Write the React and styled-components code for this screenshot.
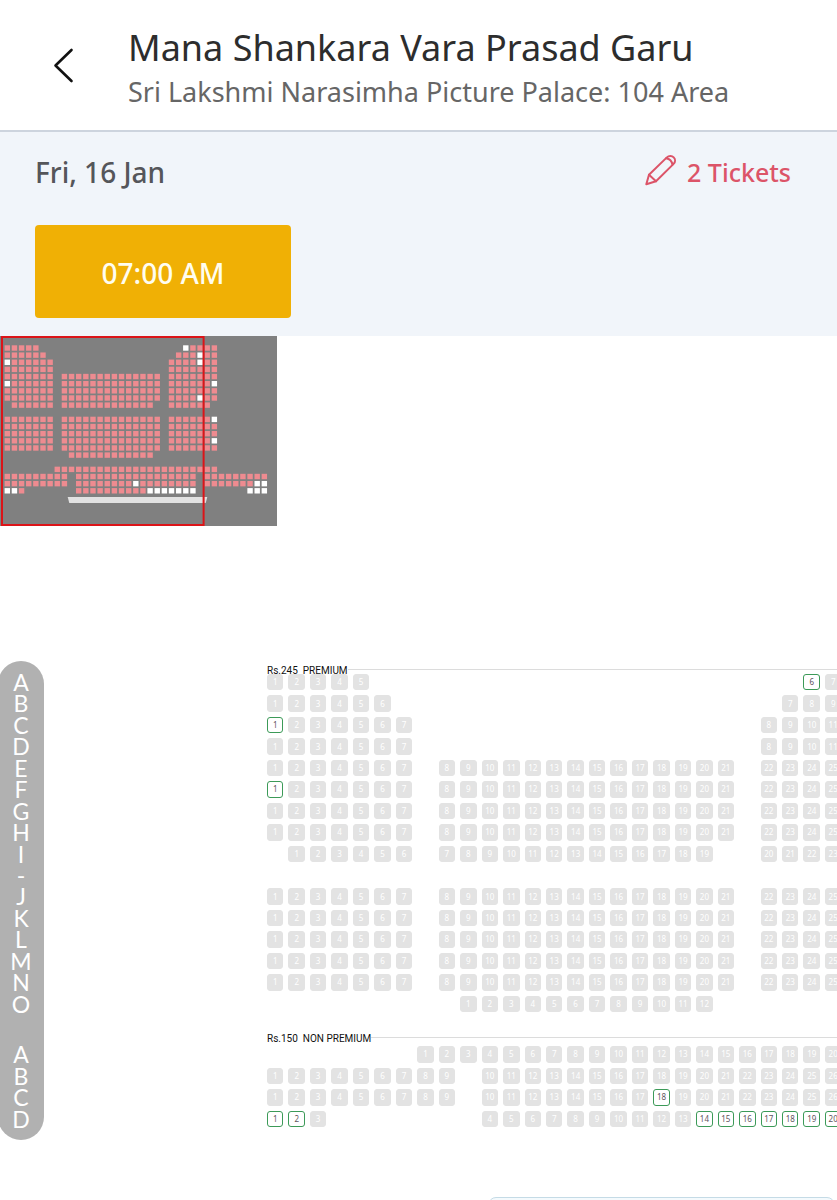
import React from 'react'
import styled, { createGlobalStyle } from 'styled-components'

const colors = {
  accent: '#dc5468',
  amber: '#f0b005',
  band: '#f1f5fa',
  sold: '#e3e3e3',
  open: '#3c9a58',
  rail: '#b1b1b1',
}

const COLUMNS = 37

// seats: [first, last] column ranges, open: columns that can still be booked
const zones = [
  {
    id: 'premium',
    label: 'Rs.245\u00a0 PREMIUM',
    rows: [
      { name: 'A', seats: [[0, 4], [25, 29]], open: [25] },
      { name: 'B', seats: [[0, 5], [24, 29]], open: [27] },
      { name: 'C', seats: [[0, 6], [23, 29]], open: [0, 27] },
      { name: 'D', seats: [[0, 6], [23, 29]], open: [] },
      { name: 'E', seats: [[0, 6], [8, 21], [23, 29]], open: [] },
      { name: 'F', seats: [[0, 6], [8, 21], [23, 29]], open: [0, 29] },
      { name: 'G', seats: [[0, 6], [8, 21], [23, 29]], open: [] },
      { name: 'H', seats: [[0, 6], [8, 21], [23, 29]], open: [27] },
      { name: 'I', seats: [[1, 6], [8, 20], [23, 28]], open: [] },
      { name: '-', seats: [], open: [] },
      { name: 'J', seats: [[0, 6], [8, 21], [23, 29]], open: [29] },
      { name: 'K', seats: [[0, 6], [8, 21], [23, 29]], open: [] },
      { name: 'L', seats: [[0, 6], [8, 21], [23, 29]], open: [] },
      { name: 'M', seats: [[0, 6], [8, 21], [23, 29]], open: [29] },
      { name: 'N', seats: [[0, 6], [8, 21], [23, 29]], open: [] },
      { name: 'O', seats: [[9, 20]], open: [] },
    ],
  },
  {
    id: 'non-premium',
    label: 'Rs.150\u00a0 NON PREMIUM',
    rows: [
      { name: 'A', seats: [[7, 29]], open: [] },
      { name: 'B', seats: [[0, 8], [10, 26], [28, 36]], open: [] },
      { name: 'C', seats: [[0, 8], [10, 26], [28, 36]], open: [18, 35, 36] },
      { name: 'D', seats: [[0, 2], [10, 26], [34, 36]], open: [0, 1, 20, 21, 22, 23, 24, 25, 26, 34, 35, 36] },
    ],
  },
]

// seats are numbered left to right, aisles don't count
const seatsOf = (row) => {
  const list = []
  row.seats.forEach(([first, last]) => {
    for (let col = first; col <= last; col += 1) {
      list.push({ col, number: list.length + 1, open: row.open.includes(col) })
    }
  })
  return list
}

const MiniMap = () => {
  const pitch = 7.14
  const offsets = [0, 17]
  return (
    <MiniMapBox viewBox="0 0 277 190" role="img" aria-label="Seat map overview">
      <rect width="277" height="190" fill="#808080" />
      {zones.map((zone, z) => zone.rows.map((row, r) => seatsOf(row).map(({ col, open }) => (
        <rect
          key={`${zone.id}-${row.name}-${col}`}
          x={4.6 + (col * pitch)}
          y={9.3 + ((offsets[z] + r) * pitch)}
          width="5.4"
          height="5.4"
          fill={open ? '#fff' : '#ee8b90'}
        />
      ))))}
      <path d="M67.7 161h139.6l-1.6 6H69.3z" fill="#e2e2e2" />
      <rect x="2" y="1" width="201.6" height="188" fill="none" stroke="#dc1418" strokeWidth="2" />
    </MiniMapBox>
  )
}

const Zone = ({ zone }) => (
  <ZoneSection>
    <ZoneTitle $tight={zone.id === 'premium'}>{zone.label}</ZoneTitle>
    <SeatGrid $rows={zone.rows.length}>
      {zone.rows.map((row, r) => seatsOf(row).map(({ col, number, open }) => (
        <Seat
          key={`${row.name}-${col}`}
          type="button"
          disabled={!open}
          aria-label={`Row ${row.name} seat ${number}`}
          $row={r + 1}
          $col={col + 1}
        >
          {number}
        </Seat>
      )))}
    </SeatGrid>
  </ZoneSection>
)

const App = () => (
  <Page>
    <GlobalStyle />
    <Header>
      <BackButton type="button" aria-label="Back">
        <svg width="24" height="36" viewBox="0 0 24 36" fill="none" stroke="#111" strokeWidth="2.6" strokeLinecap="round" strokeLinejoin="round">
          <path d="M19.500 3 3.500 18.500 19.500 34" />
        </svg>
      </BackButton>
      <Titles>
        <Movie>Mana Shankara Vara Prasad Garu</Movie>
        <Venue>Sri Lakshmi Narasimha Picture Palace: 104 Area</Venue>
      </Titles>
    </Header>
    <ShowBar>
      <ShowInfo>
        <ShowDate>Fri, 16 Jan</ShowDate>
        <TicketsButton type="button">
          <svg width="32" height="36" viewBox="0 0 32 36" fill="none" stroke={colors.accent} strokeWidth="2" strokeLinejoin="round" strokeLinecap="round">
            <path d="M1.300 30.200 4 20.800 21.600 3.600C24 1.300 27 1.600 28.700 3.400 30.500 5.300 30.500 8 28.600 9.900L11 27.300z" />
            <path d="M4 20.800 11 27.300M21.200 4.200c3 .5 5.600 2.900 6.300 6.400" />
          </svg>
          2 Tickets
        </TicketsButton>
      </ShowInfo>
      <TimeButton type="button">07:00 AM</TimeButton>
    </ShowBar>
    <MiniMap />
    <Hall>
      <Rail>
        {zones.map(zone => (
          <RailGroup key={zone.id} $rows={zone.rows.length}>
            {zone.rows.map(row => <span key={row.name}>{row.name}</span>)}
          </RailGroup>
        ))}
      </Rail>
      <Seating>
        {zones.map(zone => <Zone key={zone.id} zone={zone} />)}
      </Seating>
    </Hall>
    <BottomPanel />
  </Page>
)

const GlobalStyle = createGlobalStyle`
  * {
    box-sizing: border-box;
  }

  body {
    margin: 0;
    background: #fff;
    font-family: 'Noto Sans', 'Open Sans', sans-serif;
  }

  button {
    font-family: inherit;
    border: 0;
    padding: 0;
    background: none;
    cursor: pointer;
  }

  svg {
    display: block;
  }
`

const Page = styled.main`
  height: 100vh;
  overflow: hidden;
`

const Header = styled.header`
  display: flex;
  align-items: center;
  height: 132px;
  padding-left: 52px;
  border-bottom: 2px solid #cdd4de;
`

const BackButton = styled.button`
  width: 76px;
`

const Titles = styled.div`
  padding-top: 6px;
  white-space: nowrap;
`

const Movie = styled.h1`
  margin: 0;
  font-size: 36px;
  font-weight: 400;
  line-height: 48px;
  color: #2d2d2d;
`

const Venue = styled.p`
  margin: 0;
  font-size: 27px;
  line-height: 40px;
  color: #666;
`

const ShowBar = styled.section`
  height: 204px;
  padding: 20px 46px 0 35px;
  background: ${colors.band};
`

const ShowInfo = styled.div`
  display: flex;
  justify-content: space-between;
  align-items: center;
  height: 40px;
  margin-bottom: 33px;
`

const ShowDate = styled.h2`
  margin: 0;
  font-size: 28px;
  font-weight: 500;
  line-height: 38px;
  color: #55565a;
`

const TicketsButton = styled.button`
  display: flex;
  align-items: center;
  gap: 10px;
  font-size: 25px;
  font-weight: 500;
  line-height: 40px;
  color: ${colors.accent};
`

const TimeButton = styled.button`
  width: 256px;
  height: 93px;
  padding-top: 2px;
  border-radius: 4px;
  background: ${colors.amber};
  font-size: 28px;
  font-weight: 500;
  color: #fffdf0;
`

const MiniMapBox = styled.svg`
  width: 277px;
  height: 190px;
`

const Hall = styled.section`
  display: flex;
  align-items: flex-start;
  justify-content: space-between;
  margin-top: 135px;
`

const Rail = styled.nav`
  flex: none;
  display: flex;
  flex-direction: column;
  gap: 29px;
  width: 46px;
  margin-left: -2px;
  padding: 11px 0 10px;
  border-radius: 23px;
  background: ${colors.rail};
  font-family: Lato, 'Noto Sans', sans-serif;
  font-size: 23px;
  color: #fff;
`

const RailGroup = styled.div`
  display: grid;
  grid-template-rows: repeat(${p => p.$rows}, 1fr);
  height: ${p => (p.$rows === 4 ? 86 : 343)}px;
  line-height: 21px;
  text-align: center;
`

const Seating = styled.div`
  flex: 1;
  margin-left: 223px;
  padding-top: 3px;
  overflow: hidden;
`

const ZoneSection = styled.section`
  width: 789px;

  & + & {
    margin-top: 20px;
  }
`

const ZoneTitle = styled.h3`
  display: flex;
  height: 12px;
  margin: 0 0 ${p => (p.$tight ? '-2px' : '2px')};
  position: relative;
  z-index: 1;
  font-family: Roboto, 'Noto Sans', sans-serif;
  font-size: 10px;
  font-weight: 400;
  line-height: 14px;
  color: #111;

  &::after {
    content: '';
    flex: 1;
    height: 1px;
    margin-top: 5px;
    background: #dcdcdc;
  }
`

const SeatGrid = styled.div`
  display: grid;
  grid-template-columns: repeat(${COLUMNS}, minmax(0, 1fr));
  grid-template-rows: repeat(${p => p.$rows}, minmax(0, 1fr));
  gap: 5px;
  height: ${p => (p.$rows === 4 ? 81 : 338)}px;
`

const Seat = styled.button`
  grid-row: ${p => p.$row};
  grid-column: ${p => p.$col};
  border: 1px solid ${colors.open};
  border-radius: 3px;
  background: #fff;
  font-size: 8px;
  line-height: 14px;
  color: #5f5560;

  &:disabled {
    border-color: ${colors.sold};
    background: ${colors.sold};
    color: #fff;
    cursor: default;
  }
`

const BottomPanel = styled.div`
  width: 347px;
  height: 60px;
  margin: 57px 2px 0 auto;
  border: 1px solid #c5dbe6;
  border-radius: 8px;
  background: #f4fafd;
`

export default App
